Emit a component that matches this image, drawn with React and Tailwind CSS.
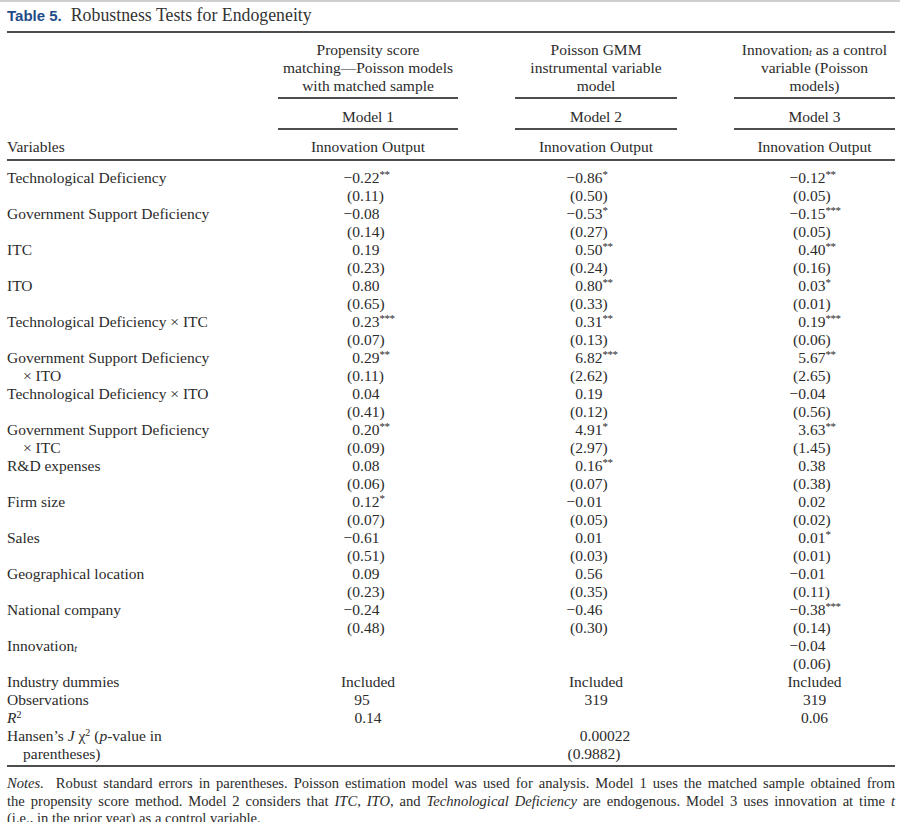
import React from 'react'

// Column layout: variables | model 1 | model 2 | model 3
const GRID = 'grid grid-cols-[214px_180px_162px_161px] gap-x-[57px]'
// offset (px) from column start to the decimal point, per model column
const DEC = [82, 68, 72]

const M = '\u2212'

const rows = [
  { label: ['Technological Deficiency'], v: [['−0.22**', '(0.11)'], ['−0.86*', '(0.50)'], ['−0.12**', '(0.05)']] },
  { label: ['Government Support Deficiency'], v: [['−0.08', '(0.14)'], ['−0.53*', '(0.27)'], ['−0.15***', '(0.05)']] },
  { label: ['ITC'], v: [['0.19', '(0.23)'], ['0.50**', '(0.24)'], ['0.40**', '(0.16)']] },
  { label: ['ITO'], v: [['0.80', '(0.65)'], ['0.80**', '(0.33)'], ['0.03*', '(0.01)']] },
  { label: ['Technological Deficiency × ITC'], v: [['0.23***', '(0.07)'], ['0.31**', '(0.13)'], ['0.19***', '(0.06)']] },
  { label: ['Government Support Deficiency', '× ITO'], v: [['0.29**', '(0.11)'], ['6.82***', '(2.62)'], ['5.67**', '(2.65)']] },
  { label: ['Technological Deficiency × ITO'], v: [['0.04', '(0.41)'], ['0.19', '(0.12)'], ['−0.04', '(0.56)']] },
  { label: ['Government Support Deficiency', '× ITC'], v: [['0.20**', '(0.09)'], ['4.91*', '(2.97)'], ['3.63**', '(1.45)']] },
  { label: ['R&D expenses'], v: [['0.08', '(0.06)'], ['0.16**', '(0.07)'], ['0.38', '(0.38)']] },
  { label: ['Firm size'], v: [['0.12*', '(0.07)'], ['−0.01', '(0.05)'], ['0.02', '(0.02)']] },
  { label: ['Sales'], v: [['−0.61', '(0.51)'], ['0.01', '(0.03)'], ['0.01*', '(0.01)']] },
  { label: ['Geographical location'], v: [['0.09', '(0.23)'], ['0.56', '(0.35)'], ['−0.01', '(0.11)']] },
  { label: ['National company'], v: [['−0.24', '(0.48)'], ['−0.46', '(0.30)'], ['−0.38***', '(0.14)']] },
]

function Num({ v, w }) {
  const m = v.replace(/-/g, M).match(/^([^.]*)(\.[^*]*)?(\**)$/)
  return (
    <div className="h-[18px] whitespace-nowrap">
      <span className="inline-block text-right" style={{ width: w }}>{m[1]}</span>
      <span>{m[2]}</span>
      {m[3] && <span className="relative -top-[5px] text-[11px] leading-none tracking-[-0.5px]">{m[3]}</span>}
    </div>
  )
}

const Sub = ({ children }) => <sub className="italic text-[10px] leading-none relative top-[1px] align-baseline">{children}</sub>
const Sup = ({ children }) => <sup className="text-[10px] leading-none relative -top-[5px] align-baseline">{children}</sup>

function Innovation() {
  return <>Innovation<Sub>t</Sub></>
}

export default function App() {
  const rule = 'h-[2px] bg-[#4d4d4d]'
  const hcell = 'text-center border-b-2 border-[#4d4d4d]'

  return (
    <div className="w-[900px] h-[822px] overflow-hidden bg-white text-[#2b2b2b] font-['Liberation_Serif',serif] text-[15.5px] leading-[18px]">
      <div className="h-[2px] bg-[#cfcfcf]" />

      <div className="pl-[7px] pr-[5px]">
        {/* Caption */}
        <div className="flex items-baseline pt-[1px] pb-[4px] h-[29px] leading-[24px]">
          <span className="font-['Liberation_Sans',sans-serif] font-bold text-[15px] text-[#1f4d88]">Table 5.</span>
          <span className="ml-[9px] text-[17.8px] text-[#333]">Robustness Tests for Endogeneity</span>
        </div>
        <div className={rule} />

        {/* Column headings */}
        <div className={GRID}>
          <div />
          <div className={`${hcell} pt-[8px] pb-[2px]`}>Propensity score<br />matching—Poisson models<br />with matched sample</div>
          <div className={`${hcell} pt-[8px] pb-[2px]`}>Poisson GMM<br />instrumental variable<br />model</div>
          <div className={`${hcell} pt-[8px] pb-[2px]`}><Innovation /> as a control<br />variable (Poisson<br />models)</div>

          <div />
          <div className={`${hcell} pt-[9px] pb-[2px]`}>Model 1</div>
          <div className={`${hcell} pt-[9px] pb-[2px]`}>Model 2</div>
          <div className={`${hcell} pt-[9px] pb-[2px]`}>Model 3</div>

          <div className="pt-[8px] pb-[3px] whitespace-nowrap">Variables</div>
          <div className="pt-[8px] pb-[3px] text-center">Innovation Output</div>
          <div className="pt-[8px] pb-[3px] text-center">Innovation Output</div>
          <div className="pt-[8px] pb-[3px] text-center">Innovation Output</div>
        </div>
        <div className={rule} />

        {/* Body */}
        <div className={`${GRID} pt-[8px] pb-[2px]`}>
          {rows.map((r, i) => (
            <React.Fragment key={i}>
              <div className="whitespace-nowrap">
                {r.label.map((l, j) => (
                  <div key={j} className={j > 0 ? 'pl-[16px]' : ''}>{l}</div>
                ))}
              </div>
              {r.v.map((pair, c) => (
                <div key={c}>
                  <Num v={pair[0]} w={DEC[c]} />
                  <Num v={pair[1]} w={DEC[c]} />
                </div>
              ))}
            </React.Fragment>
          ))}

          <div><Innovation /></div>
          <div />
          <div />
          <div>
            <Num v="−0.04" w={DEC[2]} />
            <Num v="(0.06)" w={DEC[2]} />
          </div>

          <div>Industry dummies</div>
          <div className="text-center">Included</div>
          <div className="text-center">Included</div>
          <div className="text-center">Included</div>

          <div>Observations</div>
          <div className="text-center pr-[12px]">95</div>
          <div className="text-center">319</div>
          <div className="text-center">319</div>

          <div><span className="italic">R</span><Sup>2</Sup></div>
          <div className="text-center">0.14</div>
          <div />
          <div className="text-center">0.06</div>

          <div className="whitespace-nowrap">
            <div>Hansen’s <span className="italic">J</span> χ<Sup>2</Sup> (<span className="italic">p</span>-value in</div>
            <div className="pl-[16px]">parentheses)</div>
          </div>
          <div />
          <div className="text-center">
            <div className="pl-[18px]">0.00022</div>
            <div className="pr-[4px]">(0.9882)</div>
          </div>
          <div />
        </div>
        <div className={rule} />

        {/* Notes */}
        <div className="pt-[8px] text-[14.6px] leading-[17.5px]">
          <div className="whitespace-nowrap text-justify [text-align-last:justify]">
            <span className="italic">Notes.</span>&nbsp; Robust standard errors in parentheses. Poisson estimation model was used for analysis. Model 1 uses the matched sample obtained from
          </div>
          <div className="whitespace-nowrap text-justify [text-align-last:justify]">
            the propensity score method. Model 2 considers that <span className="italic">ITC</span>, <span className="italic">ITO</span>, and <span className="italic">Technological Deficiency</span> are endogenous. Model 3 uses innovation at time <span className="italic">t</span>
          </div>
          <div className="whitespace-nowrap">(i.e., in the prior year) as a control variable.</div>
        </div>
      </div>
    </div>
  )
}
